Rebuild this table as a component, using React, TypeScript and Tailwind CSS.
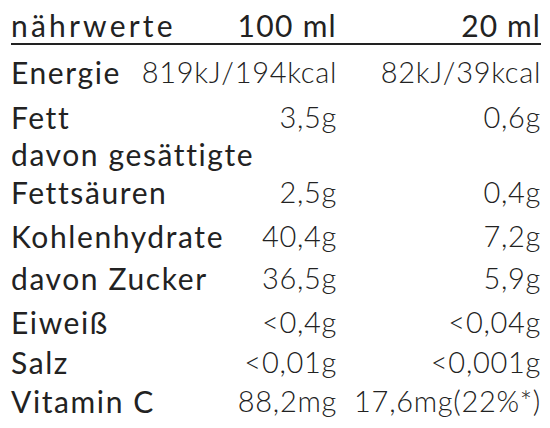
const rows = [
  { label: "Energie", per100: "819kJ/194kcal", per20: "82kJ/39kcal", gap: "mt-[9px] leading-[36px]" },
  { label: "Fett", per100: "3,5g", per20: "0,6g", gap: "mt-[9px] leading-[36px]" },
  { label: "davon gesättigte\nFettsäuren", per100: "2,5g", per20: "0,4g", gap: "mt-0 leading-[38px]" },
  { label: "Kohlenhydrate", per100: "40,4g", per20: "7,2g", gap: "mt-[7px] leading-[36px]" },
  { label: "davon Zucker", per100: "36,5g", per20: "5,9g", gap: "mt-[6px] leading-[36px]" },
  { label: "Eiweiß", per100: "<0,4g", per20: "<0,04g", gap: "mt-[8px] leading-[36px]" },
  { label: "Salz", per100: "<0,01g", per20: "<0,001g", gap: "mt-[4px] leading-[36px]" },
  { label: "Vitamin C", per100: "88,2mg", per20: "17,6mg(22%*)", gap: "mt-[3px] leading-[36px]" },
];

export default function App() {
  return (
    <div
      className="w-[550px] h-[428px] bg-white text-[#222] pl-[11px] pr-[9px] pt-[8px]"
      style={{ fontFamily: "Lato, 'Open Sans', sans-serif" }}
    >
      {/* Header */}
      <div className="flex items-end border-b-2 border-[#222] leading-[35px]">
        <div className="flex-1 text-[30px] tracking-[3.2px]">nährwerte</div>
        <div className="text-right text-[30px] tracking-[1.3px]">100 ml</div>
        <div className="w-[204px] text-right text-[30px] tracking-[1.1px]">20 ml</div>
      </div>

      {/* Rows */}
      {rows.map((row) => (
        <div key={row.label} className={`flex items-end ${row.gap}`}>
          <div className="flex-1 whitespace-pre-line text-[30px] tracking-[1.6px]">{row.label}</div>
          <div className="text-right text-[29px] font-light tracking-[0.7px]">{row.per100}</div>
          <div className="w-[204px] text-right text-[29px] font-light tracking-[0.7px]">{row.per20}</div>
        </div>
      ))}
    </div>
  );
}
